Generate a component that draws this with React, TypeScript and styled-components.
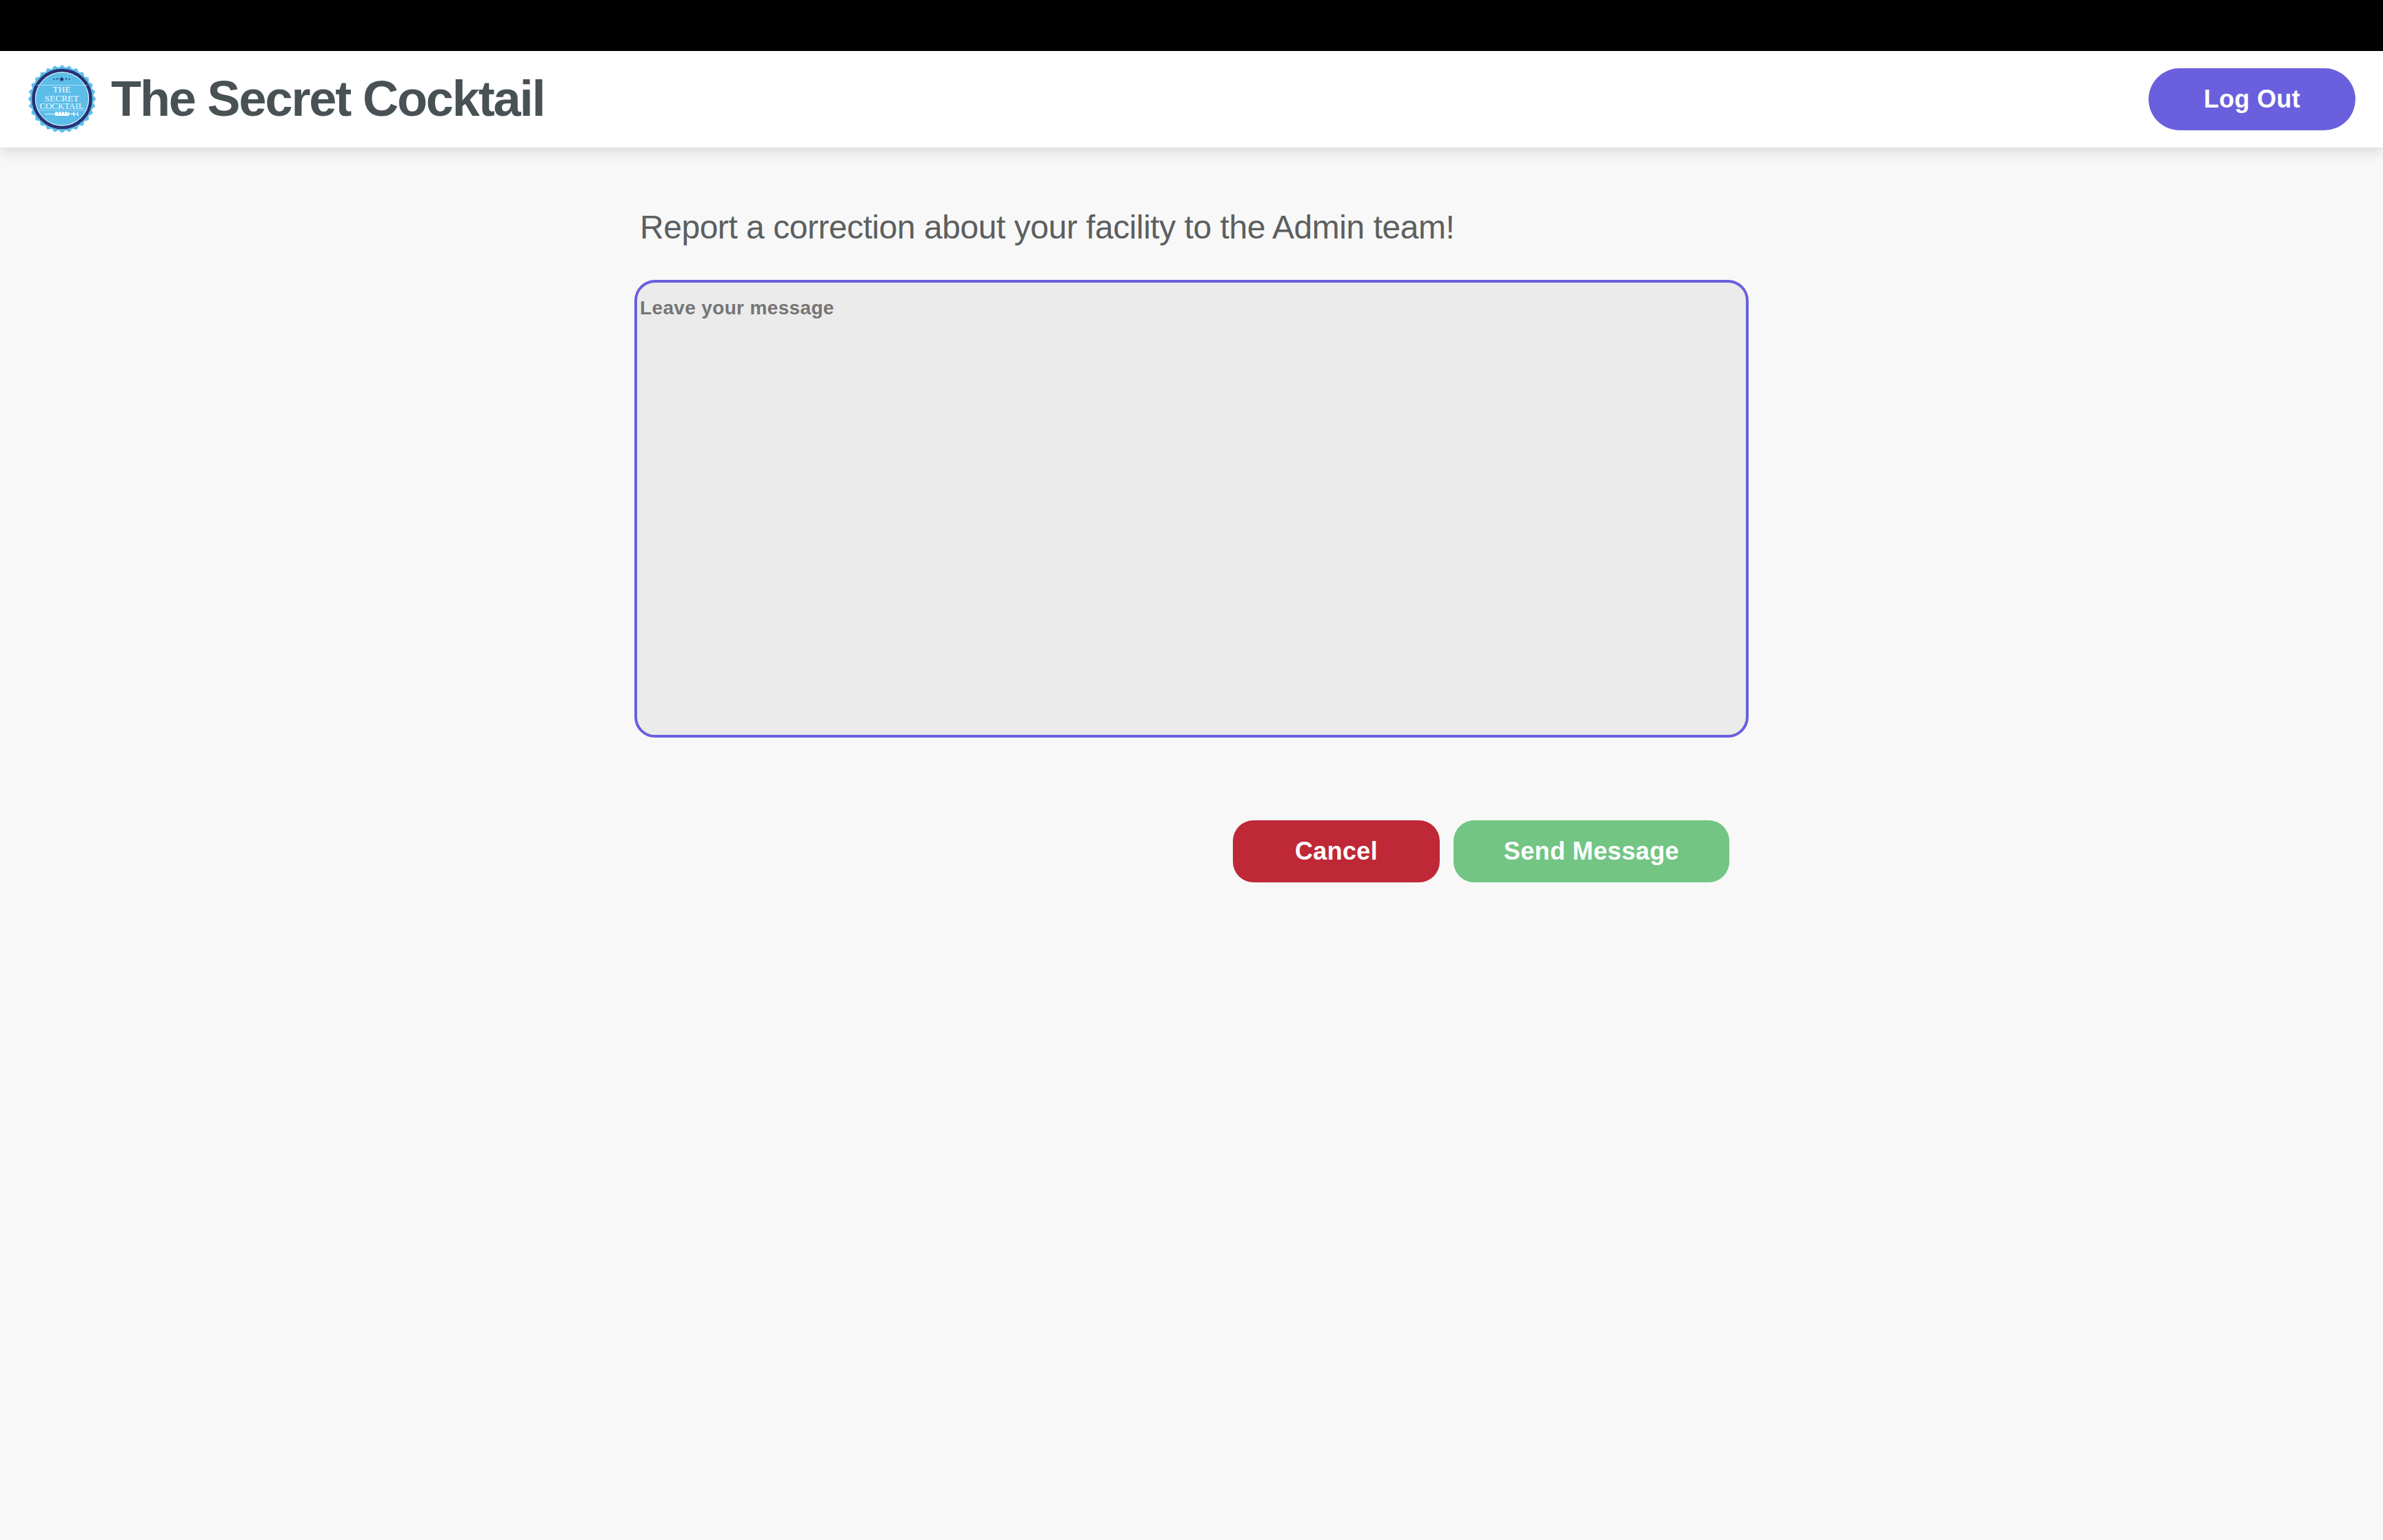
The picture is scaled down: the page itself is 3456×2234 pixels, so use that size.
import React from "react";
import styled, { createGlobalStyle } from "styled-components";

const Global = createGlobalStyle`
  html, body { margin: 0; padding: 0; background: #f8f8f8; }
  body { font-family: "Liberation Sans", Arial, sans-serif; }
`;

const Page = styled.div`
  min-height: 2234px;
  display: flex;
  flex-direction: column;
  background: #f8f8f8;
`;
const BlackBar = styled.div`
  height: 74px;
  background: #000;
`;
const Header = styled.header`
  height: 140px;
  display: flex;
  align-items: center;
  justify-content: space-between;
  padding: 0 40px 0 41px;
  background: #fff;
  box-shadow: 0 4px 20px rgba(0, 0, 0, 0.15);
  position: relative;
`;
const Brand = styled.div`
  display: flex;
  align-items: center;
  gap: 22px;
`;
const Logo = styled.svg`
  width: 98px;
  height: 100px;
  display: block;
`;
const Title = styled.h1`
  margin: 0;
  padding-bottom: 2px;
  font-size: 72px;
  line-height: 84px;
  font-weight: 700;
  letter-spacing: -2.1px;
  color: #485154;
`;
const PillButton = styled.button`
  width: 300px;
  height: 90px;
  border: 0;
  border-radius: 45px;
  background: #6a5fdd;
  color: #fff;
  font: 700 36px "Liberation Sans", Arial, sans-serif;
  letter-spacing: 0.3px;
`;
const Main = styled.main`
  width: 1616px;
  margin: 0 auto;
  display: flex;
  flex-direction: column;
`;
const Heading = styled.h2`
  margin: 88px 0 0;
  padding-left: 8px;
  font-size: 48px;
  line-height: 56px;
  font-weight: 400;
  letter-spacing: -0.47px;
  color: #5c5f60;
`;
const Message = styled.textarea`
  display: block;
  box-sizing: border-box;
  width: 1616px;
  height: 664px;
  margin-top: 48px;
  padding: 21px 4px;
  border: 4px solid #6a5fdd;
  border-radius: 30px;
  background: #ebebeb;
  outline: none;
  resize: none;
  font: 700 28px "Liberation Sans", Arial, sans-serif;
  letter-spacing: 0.35px;
  &::placeholder { color: #757575; opacity: 1; }
`;
const Actions = styled.div`
  display: flex;
  justify-content: flex-end;
  gap: 20px;
  margin-top: 120px;
  padding-right: 28px;
`;
const ActionButton = styled.button<{ $bg: string; $w: number }>`
  width: ${(p) => p.$w}px;
  height: 90px;
  border: 0;
  border-radius: 30px;
  background: ${(p) => p.$bg};
  color: #fff;
  font: 700 36px "Liberation Sans", Arial, sans-serif;
  letter-spacing: 0.35px;
`;

function badgePoints() {
  const pts: string[] = [];
  const n = 28;
  for (let i = 0; i < n * 2; i++) {
    const r = i % 2 === 0 ? 49.5 : 45.5;
    const a = (Math.PI * i) / n - Math.PI / 2;
    pts.push(`${(49 + r * Math.cos(a)).toFixed(2)},${(49.5 + r * Math.sin(a)).toFixed(2)}`);
  }
  return pts.join(" ");
}

const BadgeLogo = () => (
  <Logo viewBox="0 0 98 100" aria-label="The Secret Cocktail logo">
    <polygon points={badgePoints()} fill="#5cbde9" />
    <circle cx="49" cy="49.5" r="41.5" fill="#5cbde9" stroke="#2a3073" strokeWidth="4.6" />
    <circle cx="49" cy="49.5" r="38.6" fill="none" stroke="#fff" strokeWidth="0.9" />
    <g fill="#232a6e">
      <circle cx="37.5" cy="21" r="1" />
      <circle cx="42" cy="20.5" r="1.1" />
      <polygon points="48.5,17 49.6,19.8 52.4,19.8 50.2,21.6 51,24.2 48.5,22.6 46,24.2 46.8,21.6 44.6,19.8 47.4,19.8" />
      <circle cx="55" cy="20.5" r="1.1" />
      <circle cx="59.5" cy="21" r="1" />
    </g>
    <line x1="12" y1="29.5" x2="86" y2="29.5" stroke="#c5e8f8" strokeWidth="0.7" />
    <g fill="#f4fbfe" fontFamily="'Liberation Serif', serif" textAnchor="middle">
      <text x="48.5" y="40" fontSize="13.5" textLength="26" lengthAdjust="spacingAndGlyphs">THE</text>
      <text x="48.5" y="52.5" fontSize="13.5" textLength="50" lengthAdjust="spacingAndGlyphs">SECRET</text>
      <text x="48.5" y="64" fontSize="13.5" textLength="64" lengthAdjust="spacingAndGlyphs">COCKTAIL</text>
    </g>
    <line x1="14" y1="66" x2="84" y2="66" stroke="#c5e8f8" strokeWidth="0.6" />
    <g fill="#fff">
      <rect x="24" y="71" width="15" height="1" />
      <rect x="39" y="68.5" width="20" height="5.5" />
      <rect x="59" y="70.6" width="7" height="1.3" />
      <rect x="65.5" y="68" width="1.3" height="6.5" />
      <rect x="66.8" y="71" width="4.5" height="1" />
      <rect x="71" y="68.5" width="1.3" height="5.5" />
    </g>
    <g fill="#5cbde9">
      <rect x="43" y="68.5" width="1" height="3" />
      <rect x="47.5" y="68.5" width="1" height="3" />
      <rect x="52" y="68.5" width="1" height="3" />
      <rect x="56.5" y="68.5" width="1" height="3" />
    </g>
  </Logo>
);

export default function App() {
  return (
    <Page>
      <Global />
      <BlackBar />
      <Header>
        <Brand>
          <BadgeLogo />
          <Title>The Secret Cocktail</Title>
        </Brand>
        <PillButton>Log Out</PillButton>
      </Header>
      <Main>
        <Heading>Report a correction about your facility to the Admin team!</Heading>
        <Message placeholder="Leave your message" />
        <Actions>
          <ActionButton $bg="#bf2836" $w={300}>Cancel</ActionButton>
          <ActionButton $bg="#72c583" $w={400}>Send Message</ActionButton>
        </Actions>
      </Main>
    </Page>
  );
}
